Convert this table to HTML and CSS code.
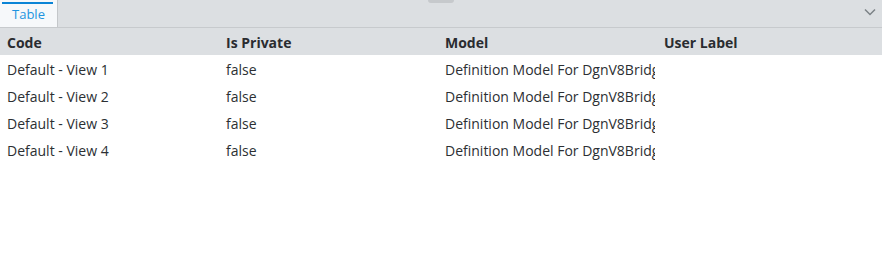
FILE: index.html
```html
<!DOCTYPE html>
<html>
<head>
<meta charset="utf-8">
<link rel="stylesheet" href="styles.css">
</head>
<body>
<div class="panel">
  <div class="tabbar">
    <div class="tab"><span class="tab-label">Table</span></div>
    <div class="handle"></div>
    <svg class="chevron" width="12" height="8" viewBox="0 0 12 8"><path d="M1 1.5 L6 6.5 L11 1.5" fill="none" stroke="#7c8287" stroke-width="1.5"/></svg>
  </div>
  <div class="table">
    <div class="row head">
      <div class="cell">Code</div><div class="cell">Is Private</div><div class="cell">Model</div><div class="cell">User Label</div>
    </div>
    <div class="row">
      <div class="cell">Default - View 1</div><div class="cell">false</div><div class="cell">Definition Model For DgnV8Bridge</div><div class="cell"></div>
    </div>
    <div class="row">
      <div class="cell">Default - View 2</div><div class="cell">false</div><div class="cell">Definition Model For DgnV8Bridge</div><div class="cell"></div>
    </div>
    <div class="row">
      <div class="cell">Default - View 3</div><div class="cell">false</div><div class="cell">Definition Model For DgnV8Bridge</div><div class="cell"></div>
    </div>
    <div class="row">
      <div class="cell">Default - View 4</div><div class="cell">false</div><div class="cell">Definition Model For DgnV8Bridge</div><div class="cell"></div>
    </div>
  </div>
</div>
</body>
</html>
```
FILE: styles.css
```css
html, body { margin: 0; padding: 0; background: #fff; }
body { font-family: "Open Sans", sans-serif; font-size: 14px; color: #2c2f33; width: 882px; height: 254px; overflow: hidden; }
.panel { width: 882px; }
.tabbar { position: relative; height: 27px; background: #dcdfe2; border-bottom: 1px solid #c7cacd; display: flex; align-items: stretch; }
.tab { width: 57px; background: #f6f8fa; border-right: 1px solid #c4c7ca; position: relative; display: flex; justify-content: center; align-items: flex-start; }
.tab::before { content: ""; position: absolute; left: 2px; right: 4px; top: 2px; height: 2px; background: #0a84d6; }
.tab-label { color: #1e94e0; font-size: 13px; line-height: 16px; margin-top: 6px; }
.handle { position: absolute; left: 428px; top: 0; width: 26px; height: 3px; background: #c6c9cc; border-radius: 0 0 3px 3px; }
.chevron { position: absolute; right: 6px; top: 8px; }
.table { width: 882px; }
.row { display: grid; grid-template-columns: repeat(4, 217px); column-gap: 2px; height: 27px; align-items: center; }
.row.head { background: #dcdfe2; font-weight: 700; color: #2a2c30; }
.cell { padding-left: 7px; padding-top: 2px; white-space: nowrap; overflow: hidden; line-height: 18px; }
```
